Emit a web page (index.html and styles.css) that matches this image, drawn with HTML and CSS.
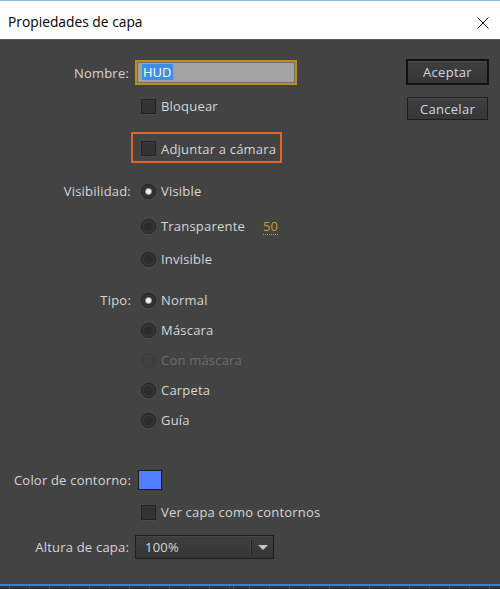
FILE: index.html
```html
<!DOCTYPE html>
<html lang="es">
<head>
<meta charset="utf-8">
<title>Propiedades de capa</title>
<link rel="stylesheet" href="styles.css">
</head>
<body>
<div class="window">
  <header class="titlebar">
    <span class="title">Propiedades de capa</span>
    <span class="close" aria-label="Cerrar">
      <svg width="12" height="12" viewBox="0 0 12 12"><path d="M0.5 0.5 L11.5 11.5 M11.5 0.5 L0.5 11.5" stroke="#111" stroke-width="1" fill="none"/></svg>
    </span>
  </header>
  <main class="panel">
    <div class="form">
      <div class="row r-name">
        <span class="lbl">Nombre:</span>
        <div class="input"><span class="sel">HUD</span></div>
      </div>
      <div class="row r-lock">
        <span class="lbl"></span>
        <span class="opt"><span class="box"></span>Bloquear</span>
      </div>
      <div class="row r-attach">
        <span class="lbl"></span>
        <div class="highlight"><span class="opt"><span class="box"></span>Adjuntar a cámara</span></div>
      </div>
      <div class="row r-vis">
        <span class="lbl">Visibilidad:</span>
        <span class="opt"><span class="radio on"></span>Visible</span>
      </div>
      <div class="row r-transp">
        <span class="lbl"></span>
        <span class="opt"><span class="radio"></span>Transparente</span>
        <span class="num">50</span>
      </div>
      <div class="row r-invis">
        <span class="lbl"></span>
        <span class="opt"><span class="radio"></span>Invisible</span>
      </div>
      <div class="row r-normal">
        <span class="lbl">Tipo:</span>
        <span class="opt"><span class="radio on"></span>Normal</span>
      </div>
      <div class="row r-step">
        <span class="lbl"></span>
        <span class="opt"><span class="radio"></span>Máscara</span>
      </div>
      <div class="row r-step">
        <span class="lbl"></span>
        <span class="opt disabled"><span class="radio"></span>Con máscara</span>
      </div>
      <div class="row r-step">
        <span class="lbl"></span>
        <span class="opt"><span class="radio"></span>Carpeta</span>
      </div>
      <div class="row r-step">
        <span class="lbl"></span>
        <span class="opt"><span class="radio"></span>Guía</span>
      </div>
      <div class="row r-color">
        <span class="lbl">Color de contorno:</span>
        <span class="swatch"></span>
      </div>
      <div class="row r-outline">
        <span class="lbl"></span>
        <span class="opt"><span class="box"></span>Ver capa como contornos</span>
      </div>
      <div class="row r-height">
        <span class="lbl">Altura de capa:</span>
        <div class="select">
          <span class="select-val">100%</span>
          <span class="select-arrow"></span>
        </div>
      </div>
    </div>
    <div class="buttons">
      <span class="btn default">Aceptar</span>
      <span class="btn">Cancelar</span>
    </div>
  </main>
  <footer class="ruler"><span class="mark"></span></footer>
</div>
</body>
</html>
```
FILE: styles.css
```css
* { box-sizing: border-box; }
html, body { margin: 0; padding: 0; }
body {
  width: 500px;
  height: 589px;
  overflow: hidden;
  background: #434343;
  font-family: "Open Sans", "DejaVu Sans", sans-serif;
}
.window {
  width: 500px;
  height: 589px;
  display: flex;
  flex-direction: column;
}
.titlebar {
  height: 40px;
  flex: none;
  background: #fff;
  border-top: 1px solid #8ab8e8;
  border-bottom: 1px solid #5a5a5a;
  display: flex;
  align-items: center;
  justify-content: space-between;
  padding: 0 11px 0 8px;
}
.title {
  font-family: "Open Sans", "Noto Sans", sans-serif;
  font-size: 13.8px;
  color: #000;
  margin-top: 2px;
}
.close { display: flex; margin-top: 6px; }
.panel {
  flex: 1;
  display: flex;
  background: #434343;
  color: #d6d6d6;
  font-size: 13px;
  letter-spacing: 0.2px;
}
.form {
  width: 400px;
  display: flex;
  flex-direction: column;
}
.row {
  display: flex;
  align-items: center;
  height: 20px;
}
.lbl {
  width: 131px;
  flex: none;
  text-align: right;
  white-space: nowrap;
  margin-right: 4px;
}
.r-name { margin-top: 20px; height: 25px; }
.r-name .lbl { padding-right: 2px; }
.r-lock { margin-top: 11px; }
.r-attach { margin-top: 16px; height: 31px; }
.r-vis { margin-top: 18px; }
.r-transp { margin-top: 15px; }
.r-invis { margin-top: 13px; }
.r-normal { margin-top: 21px; }
.r-step { margin-top: 10px; }
.r-color { margin-top: 40px; }
.r-outline { margin-top: 12px; }
.r-height { margin-top: 13px; height: 24px; }
.r-height .lbl { padding-right: 2px; }

.input {
  width: 162px;
  height: 25px;
  border: 2px solid #b8901a;
  background: #a2a2a2;
  box-shadow: inset 0 0 0 1px #6e6e6e;
  padding: 2px 0 0 5px;
  display: flex;
  align-items: flex-start;
}
.sel {
  background: #3d8ee8;
  color: #fff;
  line-height: 16px;
  padding: 0 1px;
  letter-spacing: 0;
}
.opt {
  display: flex;
  align-items: center;
  margin-left: 6px;
  white-space: nowrap;
}
.opt.disabled { color: #6c6c6c; }
.box {
  width: 15px;
  height: 15px;
  margin-right: 5px;
  border: 1px solid #232323;
  background: #333;
  box-shadow: inset 0 1px 0 #3c3c3c, 0 1px 0 #4b4b4b;
  flex: none;
}
.radio {
  width: 15px;
  height: 15px;
  margin-right: 5px;
  border-radius: 50%;
  border: 1px solid #1e1e1e;
  background: radial-gradient(circle, #2c2c2c 0 4px, #3a3a3a 6px);
  box-shadow: 0 1px 0 #4e4e4e;
  flex: none;
}
.radio.on {
  background: radial-gradient(circle, #f0f0f0 0 2px, #9a9a9a 3px, #2c2c2c 4px, #3a3a3a 6px);
}
.opt.disabled .radio {
  border-color: #3a3a3a;
  background: #404040;
  box-shadow: none;
}
.highlight {
  margin-left: -4px;
  width: 151px;
  height: 31px;
  border: 2px solid #e8632b;
  padding-left: 2px;
  display: flex;
  align-items: center;
}
.highlight .opt { margin-top: 2px; }
.num {
  margin-left: 18px;
  color: #c9a022;
  border-bottom: 1px dotted #c9a022;
  line-height: 15px;
  margin-top: 2px;
}
.swatch {
  width: 24px;
  height: 20px;
  margin-left: 3px;
  background: #5080fe;
  border: 1px solid #1c1c1c;
}
.select {
  width: 139px;
  height: 24px;
  border: 1px solid #1d1d1d;
  background: linear-gradient(#3e3e3e, #363636);
  box-shadow: inset 0 1px 0 #474747;
  display: flex;
  align-items: center;
  padding-left: 9px;
}
.select-val { flex: 1; letter-spacing: 0.2px; }
.select-arrow {
  width: 22px;
  height: 14px;
  border-left: 1px solid #202020;
  box-shadow: -1px 0 0 #4a4a4a;
  position: relative;
}
.select-arrow::after {
  content: "";
  position: absolute;
  left: 6px;
  top: 5px;
  border-left: 5px solid transparent;
  border-right: 5px solid transparent;
  border-top: 5px solid #c8c8c8;
}
.buttons {
  display: flex;
  flex-direction: column;
  align-items: flex-start;
  padding-top: 19px;
  padding-left: 6px;
}
.btn {
  display: flex;
  align-items: center;
  justify-content: center;
  width: 81px;
  height: 23px;
  border: 1px solid #1d1d1d;
  background: linear-gradient(#3f3f3f, #363636);
  box-shadow: inset 0 1px 0 #4c4c4c;
  color: #d0d8e2;
  letter-spacing: 0.3px;
  margin-left: 1px;
}
.btn.default {
  width: 83px;
  height: 26px;
  border: 2px solid #111;
  margin-left: 0;
  margin-bottom: 12px;
}
.ruler {
  height: 5px;
  flex: none;
  border-top: 2px solid #3d80c8;
  background: repeating-linear-gradient(90deg, #333 0 9px, #4a4a4a 9px 10px, #333 10px 20px);
  position: relative;
}
.mark {
  position: absolute;
  left: 233px;
  top: 0;
  width: 1px;
  height: 3px;
  background: #c02020;
}
```
